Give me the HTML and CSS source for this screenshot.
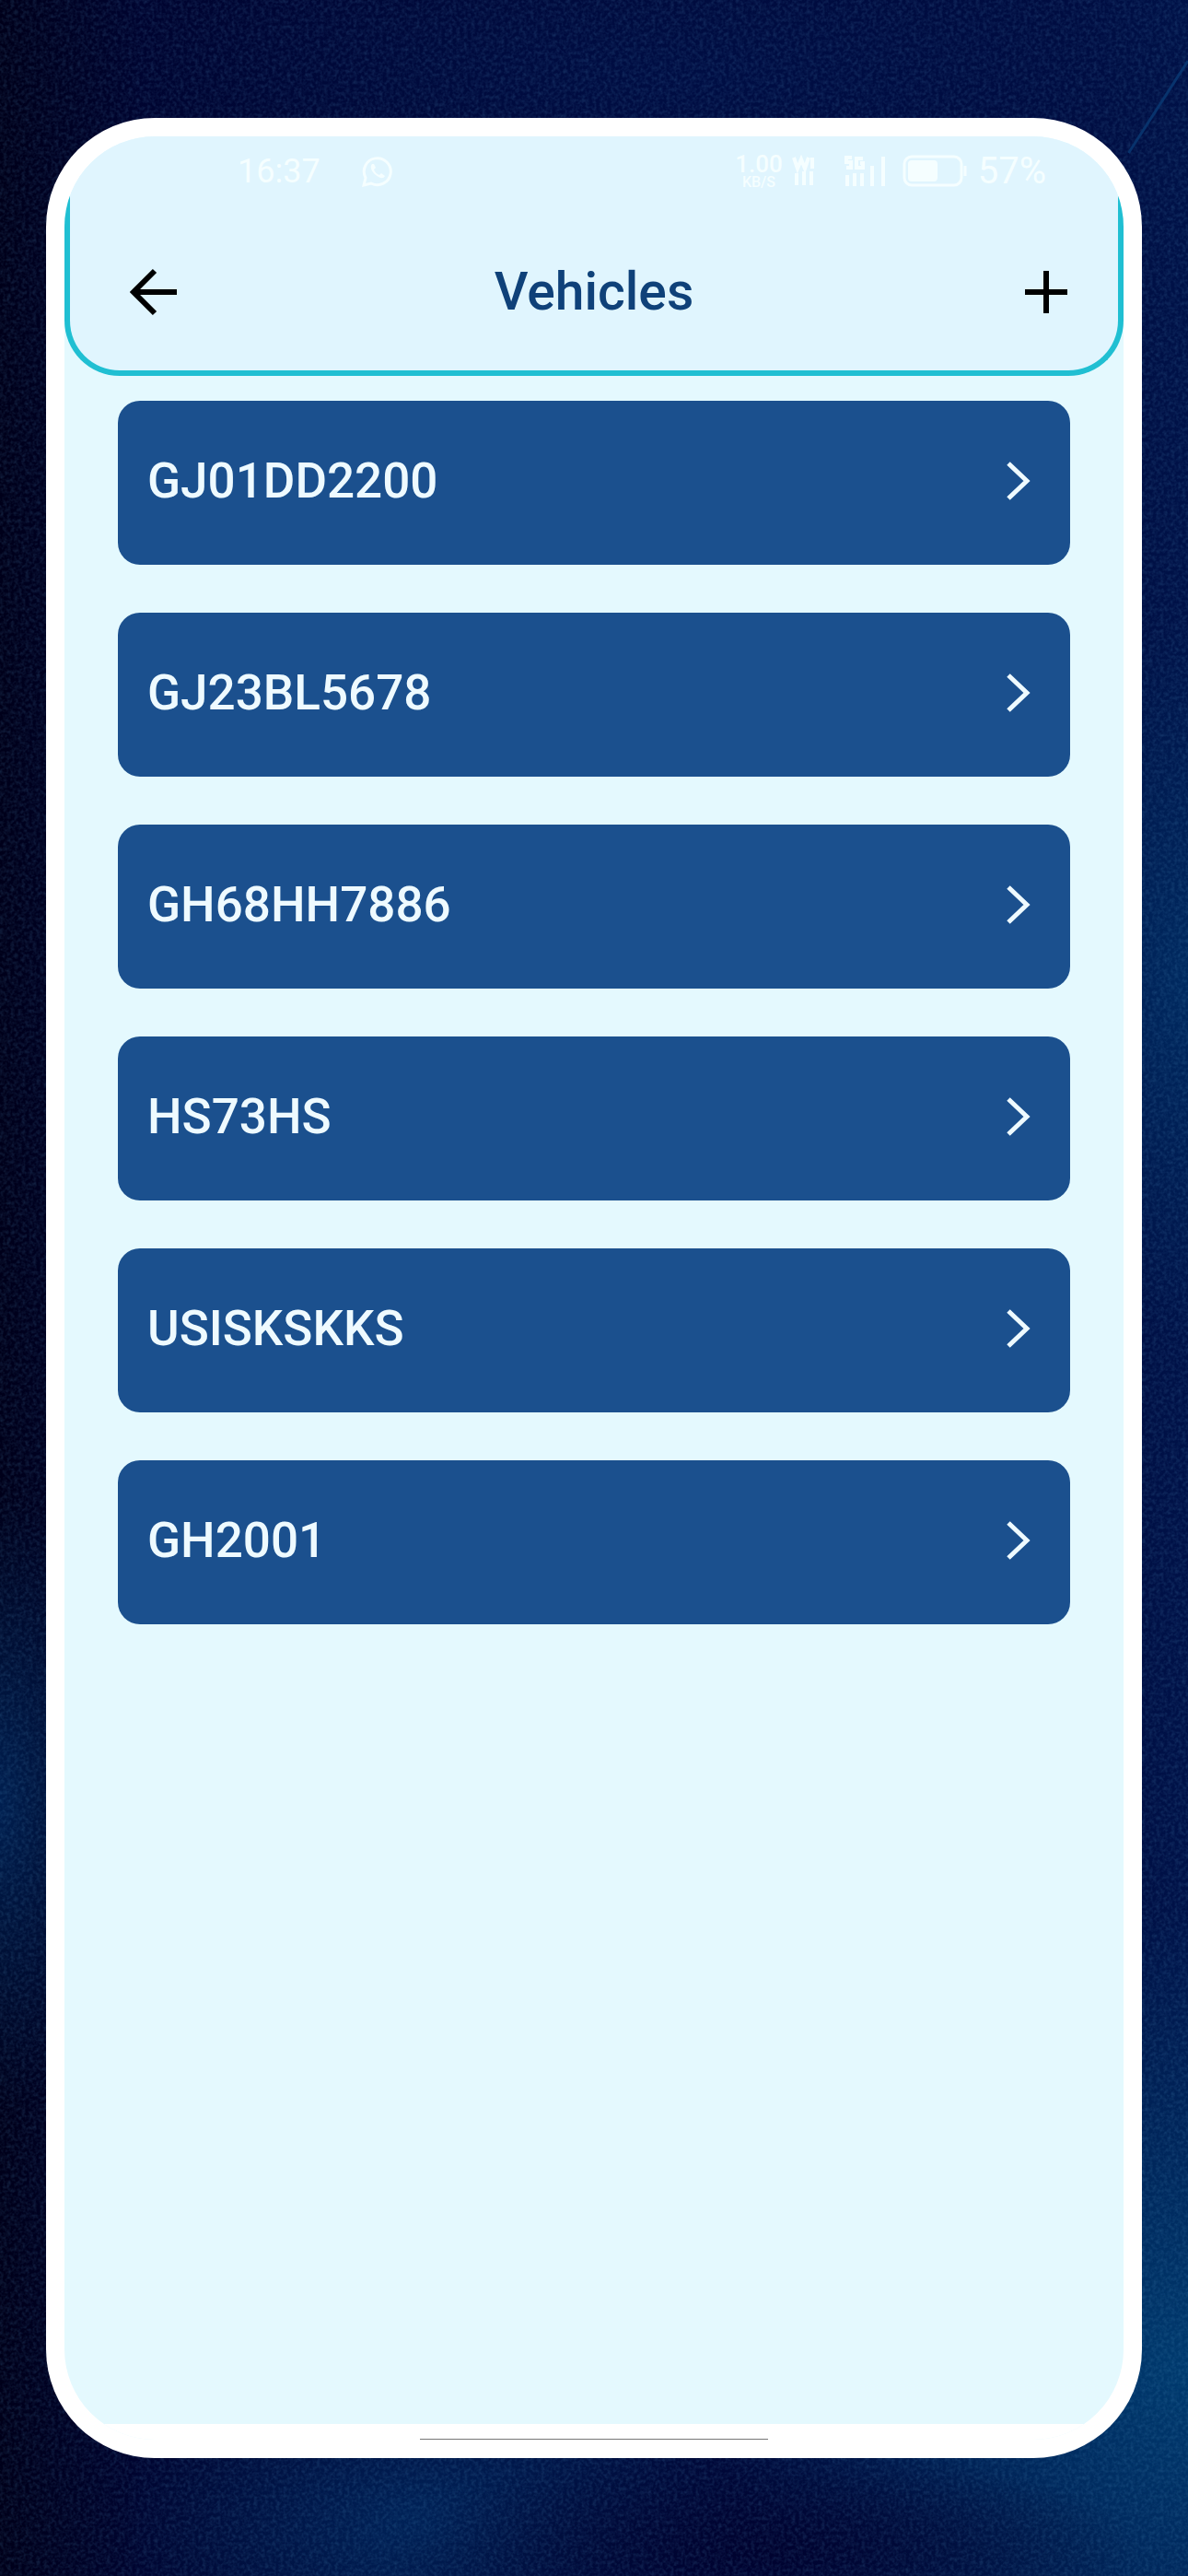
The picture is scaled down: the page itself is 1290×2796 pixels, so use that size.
FILE: index.html
```html
<!DOCTYPE html>
<html lang="en">
<head>
  <meta charset="UTF-8"/>
  <meta name="viewport" content="width=device-width, initial-scale=1.0"/>
  <title>Vehicles</title>
  <link rel="stylesheet" href="styles.css">
</head>

<body>
<!-- Dark canvas texture behind the phone -->
<svg class="backdrop" aria-hidden="true">
  <filter id="grain" x="0" y="0" width="100%" height="100%">
    <feTurbulence type="fractalNoise" baseFrequency="0.25" numOctaves="2" seed="4"/>
    <feColorMatrix values="0 0 0 0 0.1  0 0 0 0 0.35  0 0 0 0 0.6  0.9 0 0 0 -0.33"/>
  </filter>
  <rect width="100%" height="100%" filter="url(#grain)"/>
  <line class="scratch" x1="100%" y1="66" x2="95%" y2="166"/>
</svg>

<div class="phone">
  <div class="screen">
    <header class="app-header">
      <div class="status-bar">
        <div class="status-group">
          <span class="status-time">16:37</span>
          <svg class="status-chat" viewBox="0 0 36 36" aria-hidden="true">
            <path d="M3 33l2-8a14.500 14.500 0 1 1 6 6z"/>
            <path class="solid" d="M12 10c-3 3 0 9 4 12s8 5 10 1l-4-3-2 2c-3-1-5-3-6-6l2-2-2-4z"/>
          </svg>
        </div>
        <div class="status-group status-right">
          <span class="status-speed"><span>1.00</span><span class="unit">KB/S</span></span>
          <svg class="status-signal" viewBox="0 0 26 36" aria-hidden="true">
            <path d="M2 3l4 12 4-10 4 10 4-12M22 3v12M5 20v13M13 18v15M21 18v15"/>
          </svg>
          <svg class="status-bars" viewBox="0 0 48 36" aria-hidden="true">
            <path d="M9 3H3v5h5v6H3M21 4h-7v10h7V9h-3M4 22v12M12 20v14M20 20v14M31 12v22M43 2v32"/>
          </svg>
          <svg class="status-battery" viewBox="0 0 72 36" aria-hidden="true">
            <rect x="2" y="2" width="62" height="31" rx="8"/>
            <rect class="solid" x="6" y="6" width="32" height="23" rx="4"/>
            <path d="M68 12v11"/>
          </svg>
          <span class="status-percent">57%</span>
        </div>
      </div>

      <div class="title-bar">
        <button class="icon-button" type="button" aria-label="Back">
          <svg viewBox="0 0 52 52"><path d="M28 3L5 26l23 23M5 26h47"/></svg>
        </button>
        <h1>Vehicles</h1>
        <button class="icon-button" type="button" aria-label="Add vehicle">
          <svg viewBox="0 0 52 52"><path d="M3 26h46M26 3v46"/></svg>
        </button>
      </div>
    </header>

    <main class="vehicle-list">
      <button class="vehicle" type="button">
        <span>GJ01DD2200</span>
        <svg viewBox="0 0 28 44" aria-hidden="true"><path d="M3 3l20 19L3 41"/></svg>
      </button>
      <button class="vehicle" type="button">
        <span>GJ23BL5678</span>
        <svg viewBox="0 0 28 44" aria-hidden="true"><path d="M3 3l20 19L3 41"/></svg>
      </button>
      <button class="vehicle" type="button">
        <span>GH68HH7886</span>
        <svg viewBox="0 0 28 44" aria-hidden="true"><path d="M3 3l20 19L3 41"/></svg>
      </button>
      <button class="vehicle" type="button">
        <span>HS73HS</span>
        <svg viewBox="0 0 28 44" aria-hidden="true"><path d="M3 3l20 19L3 41"/></svg>
      </button>
      <button class="vehicle" type="button">
        <span>USISKSKKS</span>
        <svg viewBox="0 0 28 44" aria-hidden="true"><path d="M3 3l20 19L3 41"/></svg>
      </button>
      <button class="vehicle" type="button">
        <span>GH2001</span>
        <svg viewBox="0 0 28 44" aria-hidden="true"><path d="M3 3l20 19L3 41"/></svg>
      </button>
    </main>

    <div class="home-bar"></div>
  </div>
</div>
</body>
</html>
```

FILE: styles.css
```css
* {
    box-sizing: border-box;
}

body {
    display: flex;
    min-height: 100vh;
    margin: 0;
    padding: 128px 50px;
    font-family: Roboto, "Liberation Sans", sans-serif;
    background:
        radial-gradient(ellipse 32% 4% at 64% 99%, #00022f, transparent),
        radial-gradient(ellipse 40% 18% at 100% 92%, #003a6e, transparent),
        radial-gradient(ellipse 26% 7% at 36% 98%, #00245a, transparent),
        radial-gradient(ellipse 14% 14% at 100% 38%, #002a60, transparent),
        radial-gradient(ellipse 10% 12% at 0 70%, #001f50, transparent),
        radial-gradient(ellipse 50% 6% at 60% 3%, #000e44, transparent),
        linear-gradient(90deg, #00001a, #000430 12%, #000c40 90%, #001248);
}

.backdrop {
    position: absolute;
    inset: 0;
    width: 100%;
    height: 100%;
    opacity: 0.4;
}

.scratch {
    stroke: #1468a8;
    stroke-width: 3;
}

.phone {
    position: relative;
    display: flex;
    flex: 1;
    padding: 20px;
    background: #ffffff;
    border-radius: 118px;
}

.screen {
    display: flex;
    flex: 1;
    flex-direction: column;
    overflow: hidden;
    background: #e4f9fe;
    border-radius: 98px;
}

/* Header */
.app-header {
    padding-bottom: 46px;
    background: #e0f5fe;
    border: 6px solid #20bfd2;
    border-top: none;
    border-radius: 0 0 60px 60px;
}

.status-bar {
    display: flex;
    justify-content: space-between;
    padding: 16px 78px 0 182px;
    color: #f5feff;
}

.status-group {
    display: flex;
    align-items: center;
    gap: 44px;
    height: 44px;
}

.status-right {
    gap: 10px;
}

.status-time {
    font-size: 36px;
    line-height: 44px;
}

.status-percent {
    font-size: 40px;
    line-height: 44px;
}

.status-speed {
    display: flex;
    flex-direction: column;
    font-size: 26px;
    font-weight: 500;
    line-height: 24px;
    text-align: center;
}

.status-speed .unit {
    font-size: 16px;
    line-height: 16px;
}

.status-bar svg {
    height: 36px;
    fill: none;
    stroke: currentColor;
    stroke-width: 4;
}

.status-bar .solid {
    fill: currentColor;
    stroke: none;
}

.status-bar .status-chat {
    width: 36px;
    stroke-width: 3;
}

.status-signal {
    width: 26px;
    margin-right: 20px;
}

.status-bars {
    width: 48px;
    margin-right: 6px;
}

.status-bar .status-battery {
    width: 72px;
    stroke-width: 3;
}

.title-bar {
    display: flex;
    align-items: center;
    justify-content: space-between;
    margin-top: 70px;
    padding: 0 52px;
}

h1 {
    margin: 0;
    color: #0f4179;
    font-size: 57px;
    font-weight: 500;
    line-height: 78px;
}

.icon-button {
    display: flex;
    justify-content: flex-end;
    width: 64px;
    padding: 0;
    background: none;
    border: none;
    cursor: pointer;
}

.icon-button svg {
    width: 52px;
    height: 52px;
    fill: none;
    stroke: #000000;
    stroke-width: 6;
}

/* Vehicle list */
.vehicle-list {
    display: flex;
    flex: 1;
    flex-direction: column;
    gap: 52px;
    padding: 27px 58px;
}

.vehicle {
    display: flex;
    align-items: center;
    justify-content: space-between;
    height: 178px;
    padding: 0 42px 4px 32px;
    color: #eefaff;
    font-family: inherit;
    font-size: 53px;
    font-weight: 500;
    line-height: 60px;
    background: #1b508e;
    border: none;
    border-radius: 24px;
    cursor: pointer;
}

.vehicle svg {
    width: 28px;
    height: 44px;
    fill: none;
    stroke: currentColor;
    stroke-width: 5;
}

/* Bottom strip with the gesture line */
.home-bar {
    height: 17px;
    padding: 0 386px;
    background: linear-gradient(#777777, #777777) bottom / 100% 1px no-repeat content-box, #ffffff;
}
```
